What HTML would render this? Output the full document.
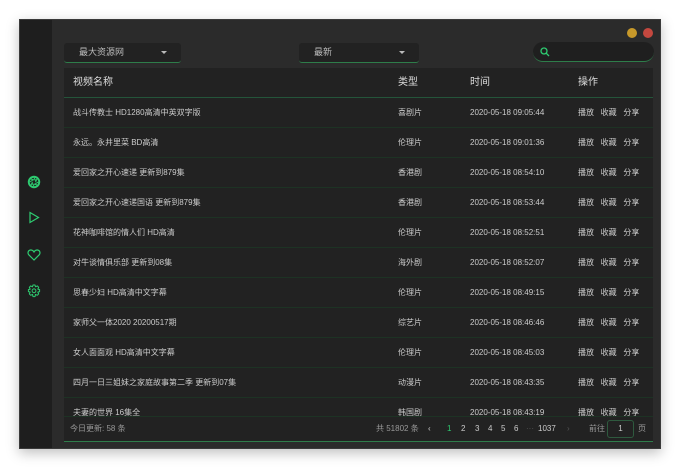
<!DOCTYPE html>
<html><head><meta charset="utf-8"><style>
*{margin:0;padding:0;box-sizing:border-box}
body{width:680px;height:467px;background:#fff;position:relative;font-family:"Liberation Sans","Noto Sans CJK SC",sans-serif;overflow:hidden}
.win{position:absolute;left:19px;top:19px;width:642px;height:430px;background:#2b2b2b;box-shadow:0 4px 12px rgba(0,0,0,.25);border:1px solid #3a3a3a}
.side{position:absolute;left:0;top:0;width:32px;height:100%;background:#1e1e1e}
.dot{position:absolute;top:8px;width:10px;height:10px;border-radius:50%}
.sel{position:absolute;top:23px;height:20px;background:#222;border-bottom:1px solid #2e7d4a;border-radius:3px;color:#bbb;font-size:9px;line-height:19px}
.sel i{position:absolute;right:14px;top:8px;border:3px solid transparent;border-top:3px solid #bbb}
.search{position:absolute;left:513px;top:22px;width:121px;height:20px;background:#1f1f1f;border-radius:10px;border-bottom:1px solid #2e7d4a}
.tbl{position:absolute;left:44px;top:48px;width:589px;height:374px;background:#222;overflow:hidden;border-bottom:1px solid #2e7d4a}
.row{position:absolute;left:0;width:589px;height:30px;border-bottom:1px solid #1d3324;font-size:8px;color:#ccc;line-height:30px}
.row span{position:absolute}
.hd{font-size:10px;color:#ddd;border-bottom:1px solid #24553a}
.foot{position:absolute;left:0;top:348px;width:589px;height:26px;background:#222;border-top:1px solid #1d3324;font-size:8px;color:#999;line-height:24px}
.foot span{position:absolute}
</style></head><body>
<div class="win">
<div class="side">
<svg style="position:absolute;left:7px;top:155px" width="14" height="14" viewBox="0 0 14 14"><circle cx="7" cy="7" r="6.2" fill="#2ecc71"/><circle cx="7" cy="7" r="4.3" fill="#1e1e1e"/><path d="M7 2.7L9 6M11.3 7L8 9M7 11.3L5 8M2.7 7L6 5M10 3.8L8.5 7.2M10.2 10L6.6 9M4 10.2L5.5 6.8M3.8 4L7.4 5" stroke="#2ecc71" stroke-width="1"/></svg>
<svg style="position:absolute;left:8px;top:191px" width="12" height="13" viewBox="0 0 12 13"><path d="M2 1.5L10.5 6.5L2 11.5Z" fill="none" stroke="#2ecc71" stroke-width="1.2"/></svg>
<svg style="position:absolute;left:7px;top:229px" width="14" height="12" viewBox="0 0 14 12"><path d="M7 11L1.8 5.8C0.5 4.3 0.8 1.5 3.4 1 5 0.8 6.3 1.8 7 3 7.7 1.8 9 0.8 10.6 1 13.2 1.5 13.5 4.3 12.2 5.8Z" fill="none" stroke="#2ecc71" stroke-width="1.2"/></svg>
<svg style="position:absolute;left:7px;top:264px" width="14" height="14" viewBox="0 0 14 14"><path d="M6 1H8L8.5 2.8 10.3 1.9 11.7 3.3 10.8 5.1 12.6 5.6V7.6L10.8 8.1 11.7 9.9 10.3 11.3 8.5 10.4 8 12.6H6L5.5 10.4 3.7 11.3 2.3 9.9 3.2 8.1 1.4 7.6V5.6L3.2 5.1 2.3 3.3 3.7 1.9 5.5 2.8Z" fill="none" stroke="#2ecc71" stroke-width="1" stroke-linejoin="round"/><circle cx="7" cy="6.8" r="1.9" fill="none" stroke="#2ecc71" stroke-width="1"/></svg>
</div>
<div class="dot" style="left:607px;background:#c7992a"></div>
<div class="dot" style="left:623px;background:#c4483f"></div>
<div class="sel" style="left:44px;width:117px;padding-left:15px">最大资源网<i></i></div>
<div class="sel" style="left:279px;width:120px;padding-left:15px">最新<i></i></div>
<div class="search"><svg style="position:absolute;left:7px;top:5px" width="10" height="10" viewBox="0 0 10 10"><circle cx="4" cy="4" r="3" fill="none" stroke="#2ecc71" stroke-width="1.3"/><path d="M6.2 6.2L9 9" stroke="#2ecc71" stroke-width="1.3"/></svg></div>
<div class="tbl">
<div class="row hd" style="top:0"><span style="left:9px">视频名称</span><span style="left:334px">类型</span><span style="left:406px">时间</span><span style="left:514px">操作</span></div>
<div class="row" style="top:30px"><span style="left:9px">战斗传教士 HD1280高清中英双字版</span><span style="left:334px">喜剧片</span><span style="left:406px">2020-05-18 09:05:44</span><span style="left:514px">播放&nbsp;&nbsp;&nbsp;收藏&nbsp;&nbsp;&nbsp;分享</span></div>
<div class="row" style="top:60px"><span style="left:9px">永远。永井里菜 BD高清</span><span style="left:334px">伦理片</span><span style="left:406px">2020-05-18 09:01:36</span><span style="left:514px">播放&nbsp;&nbsp;&nbsp;收藏&nbsp;&nbsp;&nbsp;分享</span></div>
<div class="row" style="top:90px"><span style="left:9px">爱回家之开心速递 更新到879集</span><span style="left:334px">香港剧</span><span style="left:406px">2020-05-18 08:54:10</span><span style="left:514px">播放&nbsp;&nbsp;&nbsp;收藏&nbsp;&nbsp;&nbsp;分享</span></div>
<div class="row" style="top:120px"><span style="left:9px">爱回家之开心速递国语 更新到879集</span><span style="left:334px">香港剧</span><span style="left:406px">2020-05-18 08:53:44</span><span style="left:514px">播放&nbsp;&nbsp;&nbsp;收藏&nbsp;&nbsp;&nbsp;分享</span></div>
<div class="row" style="top:150px"><span style="left:9px">花神咖啡馆的情人们 HD高清</span><span style="left:334px">伦理片</span><span style="left:406px">2020-05-18 08:52:51</span><span style="left:514px">播放&nbsp;&nbsp;&nbsp;收藏&nbsp;&nbsp;&nbsp;分享</span></div>
<div class="row" style="top:180px"><span style="left:9px">对牛谈情俱乐部 更新到08集</span><span style="left:334px">海外剧</span><span style="left:406px">2020-05-18 08:52:07</span><span style="left:514px">播放&nbsp;&nbsp;&nbsp;收藏&nbsp;&nbsp;&nbsp;分享</span></div>
<div class="row" style="top:210px"><span style="left:9px">思春少妇 HD高清中文字幕</span><span style="left:334px">伦理片</span><span style="left:406px">2020-05-18 08:49:15</span><span style="left:514px">播放&nbsp;&nbsp;&nbsp;收藏&nbsp;&nbsp;&nbsp;分享</span></div>
<div class="row" style="top:240px"><span style="left:9px">家师父一体2020 20200517期</span><span style="left:334px">综艺片</span><span style="left:406px">2020-05-18 08:46:46</span><span style="left:514px">播放&nbsp;&nbsp;&nbsp;收藏&nbsp;&nbsp;&nbsp;分享</span></div>
<div class="row" style="top:270px"><span style="left:9px">女人面面观 HD高清中文字幕</span><span style="left:334px">伦理片</span><span style="left:406px">2020-05-18 08:45:03</span><span style="left:514px">播放&nbsp;&nbsp;&nbsp;收藏&nbsp;&nbsp;&nbsp;分享</span></div>
<div class="row" style="top:300px"><span style="left:9px">四月一日三姐妹之家庭故事第二季 更新到07集</span><span style="left:334px">动漫片</span><span style="left:406px">2020-05-18 08:43:35</span><span style="left:514px">播放&nbsp;&nbsp;&nbsp;收藏&nbsp;&nbsp;&nbsp;分享</span></div>
<div class="row" style="top:330px"><span style="left:9px">夫妻的世界 16集全</span><span style="left:334px">韩国剧</span><span style="left:406px">2020-05-18 08:43:19</span><span style="left:514px">播放&nbsp;&nbsp;&nbsp;收藏&nbsp;&nbsp;&nbsp;分享</span></div>
<div class="foot"><span style="left:6px">今日更新: 58 条</span><span style="left:312px">共 51802 条</span><span style="left:364px;color:#ccc">‹</span><span style="left:383px;color:#2ecc71">1</span><span style="left:397px;color:#ccc">2</span><span style="left:411px;color:#ccc">3</span><span style="left:424px;color:#ccc">4</span><span style="left:437px;color:#ccc">5</span><span style="left:450px;color:#ccc">6</span><span style="left:462px;color:#555">···</span><span style="left:474px;color:#ccc">1037</span><span style="left:503px;color:#555">›</span><span style="left:525px">前往</span><span style="left:543px;top:3px;width:27px;height:18px;border:1px solid #2e5a3e;border-radius:3px;text-align:center;line-height:16px;color:#ccc">1</span><span style="left:574px">页</span></div>
</div>
</div>
</body></html>
